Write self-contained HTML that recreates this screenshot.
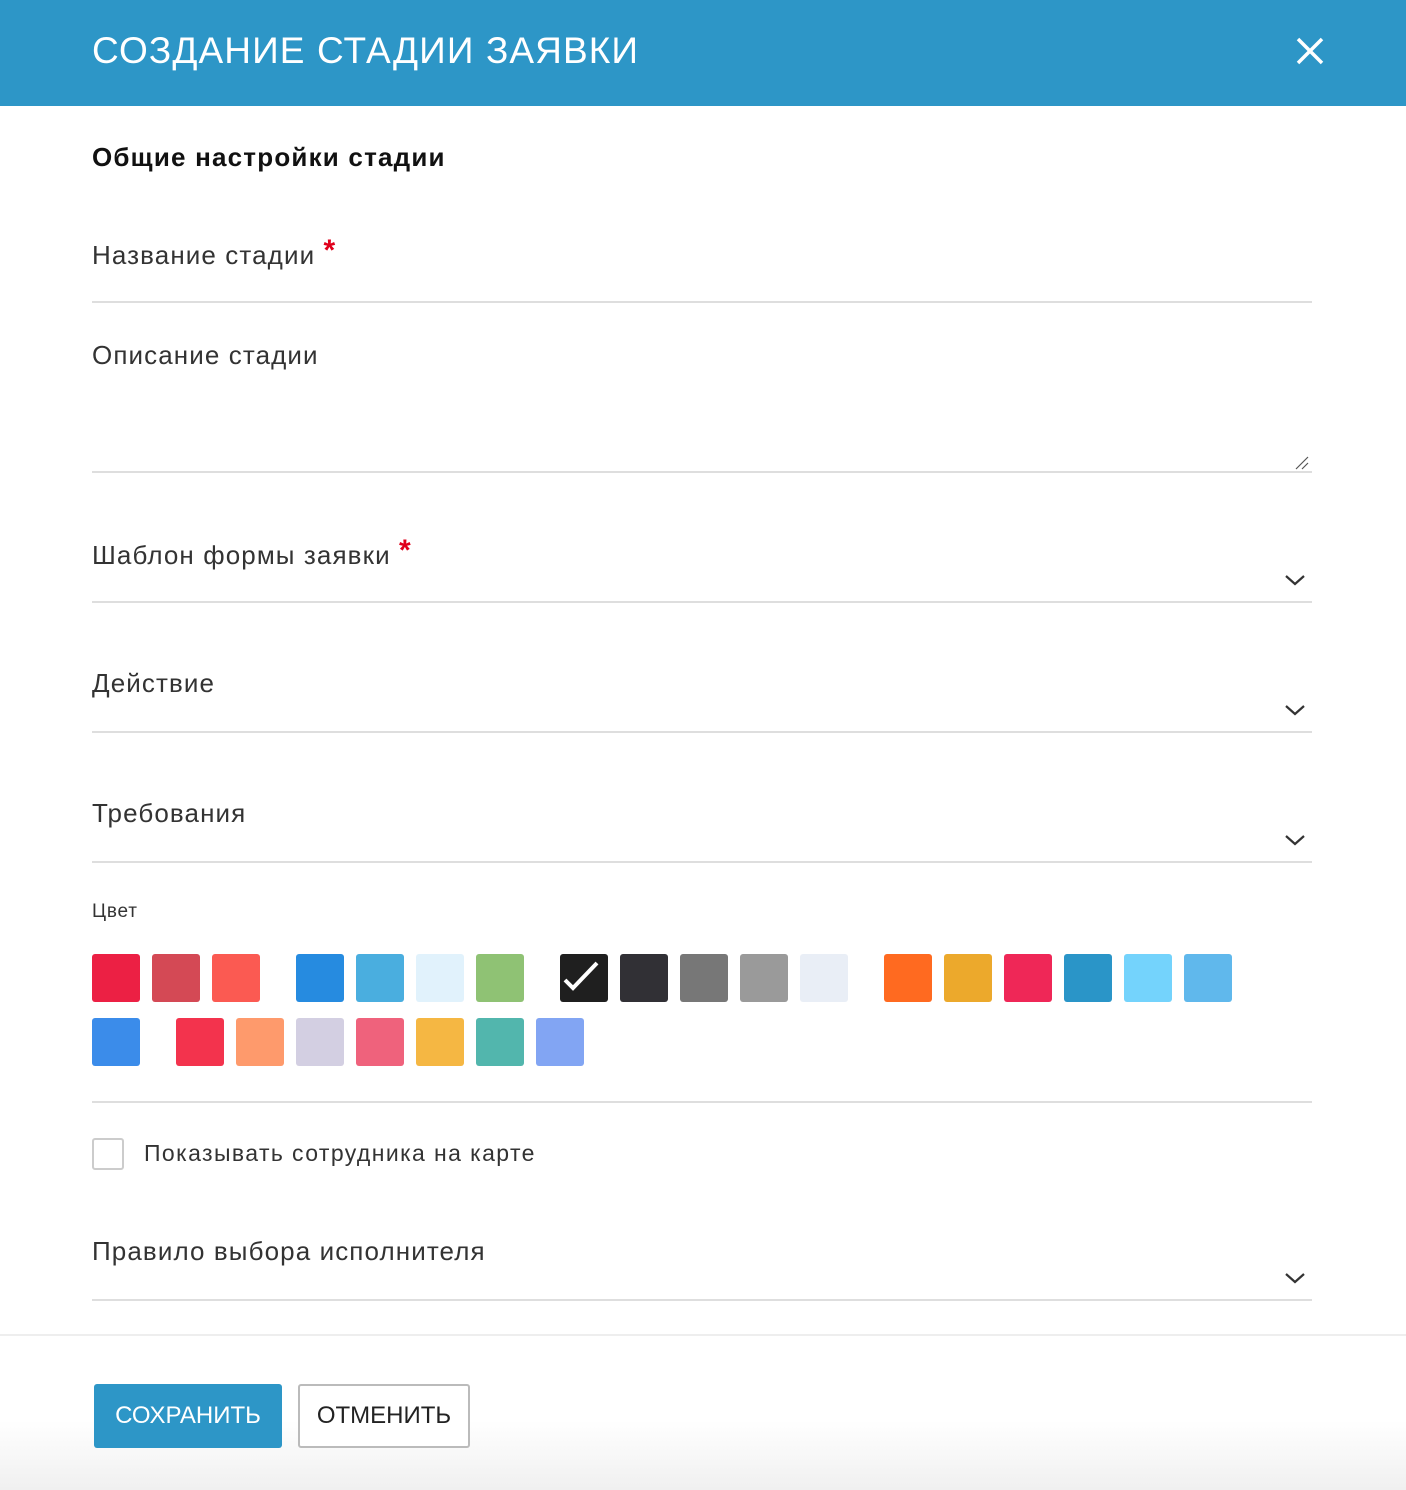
<!DOCTYPE html>
<html><head><meta charset="utf-8"><style>
*{box-sizing:border-box;margin:0;padding:0}
body{width:1406px;height:1490px;background:#fff;font-family:"Liberation Sans","DejaVu Sans",sans-serif;color:#222;position:relative;overflow:hidden}
.hdr{position:absolute;left:0;top:0;width:1406px;height:106px;background:#2d96c7;color:#fff}
.hdr .t{position:absolute;left:92px;top:30px;font-size:37px;letter-spacing:1.1px}
.abs{position:absolute}
.line{position:absolute;left:92px;width:1220px;height:2px;background:#dedede}
.lbl{position:absolute;left:92px;font-size:26px;color:#333;letter-spacing:1.1px}
.req{color:#e0001b;font-size:30px;font-weight:bold;position:relative;top:-4px}
.chev{position:absolute;left:1284px;width:22px;height:14px}
.sw{position:absolute;width:48px;height:48px;border-radius:3px}
.foot{position:absolute;left:0;top:1334px;width:1406px;height:156px;border-top:2px solid #eee;background:linear-gradient(#fff 55%,#f0f0f0)}
</style></head><body>
<div class="hdr"><div class="t">СОЗДАНИЕ СТАДИИ ЗАЯВКИ</div>
<svg class="abs" style="left:1296px;top:37px" width="28" height="28" viewBox="0 0 28 28"><path d="M2 2L26 26M26 2L2 26" stroke="#fff" stroke-width="3.5"/></svg></div>
<div class="abs" style="left:92px;top:142px;font-size:26px;font-weight:bold;color:#111;letter-spacing:1.2px">Общие настройки стадии</div>
<div class="lbl" style="top:238px">Название стадии <span class="req">*</span></div>
<div class="line" style="top:301px"></div>
<div class="lbl" style="top:340px">Описание стадии</div>
<svg class="abs" style="left:1294px;top:455px" width="16" height="16"><path d="M2 14L14 2M8 14L14 8" stroke="#555" stroke-width="1.2"/></svg>
<div class="line" style="top:471px"></div>
<div class="lbl" style="top:538px">Шаблон формы заявки <span class="req">*</span></div>
<svg class="chev" style="top:573px" viewBox="0 0 22 14"><path d="M2 3L11 11L20 3" fill="none" stroke="#333" stroke-width="2.2"/></svg>
<div class="line" style="top:601px"></div>
<div class="lbl" style="top:668px">Действие</div>
<svg class="chev" style="top:703px" viewBox="0 0 22 14"><path d="M2 3L11 11L20 3" fill="none" stroke="#333" stroke-width="2.2"/></svg>
<div class="line" style="top:731px"></div>
<div class="lbl" style="top:798px">Требования</div>
<svg class="chev" style="top:833px" viewBox="0 0 22 14"><path d="M2 3L11 11L20 3" fill="none" stroke="#333" stroke-width="2.2"/></svg>
<div class="line" style="top:861px"></div>
<div class="abs" style="left:92px;top:901px;font-size:19px;color:#333;letter-spacing:0.8px">Цвет</div>
<div class="sw" style="left:92px;top:954px;background:#ec2044"></div>
<div class="sw" style="left:152px;top:954px;background:#d44955"></div>
<div class="sw" style="left:212px;top:954px;background:#fb5a52"></div>
<div class="sw" style="left:296px;top:954px;background:#268be0"></div>
<div class="sw" style="left:356px;top:954px;background:#4aaedf"></div>
<div class="sw" style="left:416px;top:954px;background:#e1f2fc"></div>
<div class="sw" style="left:476px;top:954px;background:#8fc274"></div>
<div class="sw" style="left:560px;top:954px;background:#1f1f1f"><svg width="48" height="48"><path d="M5 26L13 34L37 9" fill="none" stroke="#fff" stroke-width="4"/></svg></div>
<div class="sw" style="left:620px;top:954px;background:#313035"></div>
<div class="sw" style="left:680px;top:954px;background:#777"></div>
<div class="sw" style="left:740px;top:954px;background:#9a9a9a"></div>
<div class="sw" style="left:800px;top:954px;background:#e9eef6"></div>
<div class="sw" style="left:884px;top:954px;background:#ff6a20"></div>
<div class="sw" style="left:944px;top:954px;background:#eca92c"></div>
<div class="sw" style="left:1004px;top:954px;background:#ef2757"></div>
<div class="sw" style="left:1064px;top:954px;background:#2a95c8"></div>
<div class="sw" style="left:1124px;top:954px;background:#74d3fc"></div>
<div class="sw" style="left:1184px;top:954px;background:#60b8ec"></div>
<div class="sw" style="left:92px;top:1018px;background:#3b8cea"></div>
<div class="sw" style="left:176px;top:1018px;background:#f3334d"></div>
<div class="sw" style="left:236px;top:1018px;background:#fe9a6c"></div>
<div class="sw" style="left:296px;top:1018px;background:#d3cfe2"></div>
<div class="sw" style="left:356px;top:1018px;background:#ef627c"></div>
<div class="sw" style="left:416px;top:1018px;background:#f5b743"></div>
<div class="sw" style="left:476px;top:1018px;background:#52b6ad"></div>
<div class="sw" style="left:536px;top:1018px;background:#82a5f3"></div>
<div class="line" style="top:1101px"></div>
<div class="abs" style="left:92px;top:1138px;width:32px;height:32px;border:2px solid #ccc;border-radius:3px"></div>
<div class="abs" style="left:144px;top:1140px;font-size:23px;color:#333;letter-spacing:1.4px">Показывать сотрудника на карте</div>
<div class="lbl" style="top:1236px">Правило выбора исполнителя</div>
<svg class="chev" style="top:1271px" viewBox="0 0 22 14"><path d="M2 3L11 11L20 3" fill="none" stroke="#333" stroke-width="2.2"/></svg>
<div class="line" style="top:1299px"></div>
<div class="foot"></div>
<div class="abs" style="left:94px;top:1384px;width:188px;height:64px;background:#2d96c7;border-radius:3px;color:#fff;font-size:24px;line-height:64px;text-align:center">СОХРАНИТЬ</div>
<div class="abs" style="left:298px;top:1384px;width:172px;height:64px;background:#fff;border:2px solid #bbb;border-radius:3px;color:#222;font-size:24px;line-height:60px;text-align:center">ОТМЕНИТЬ</div>
</body></html>
